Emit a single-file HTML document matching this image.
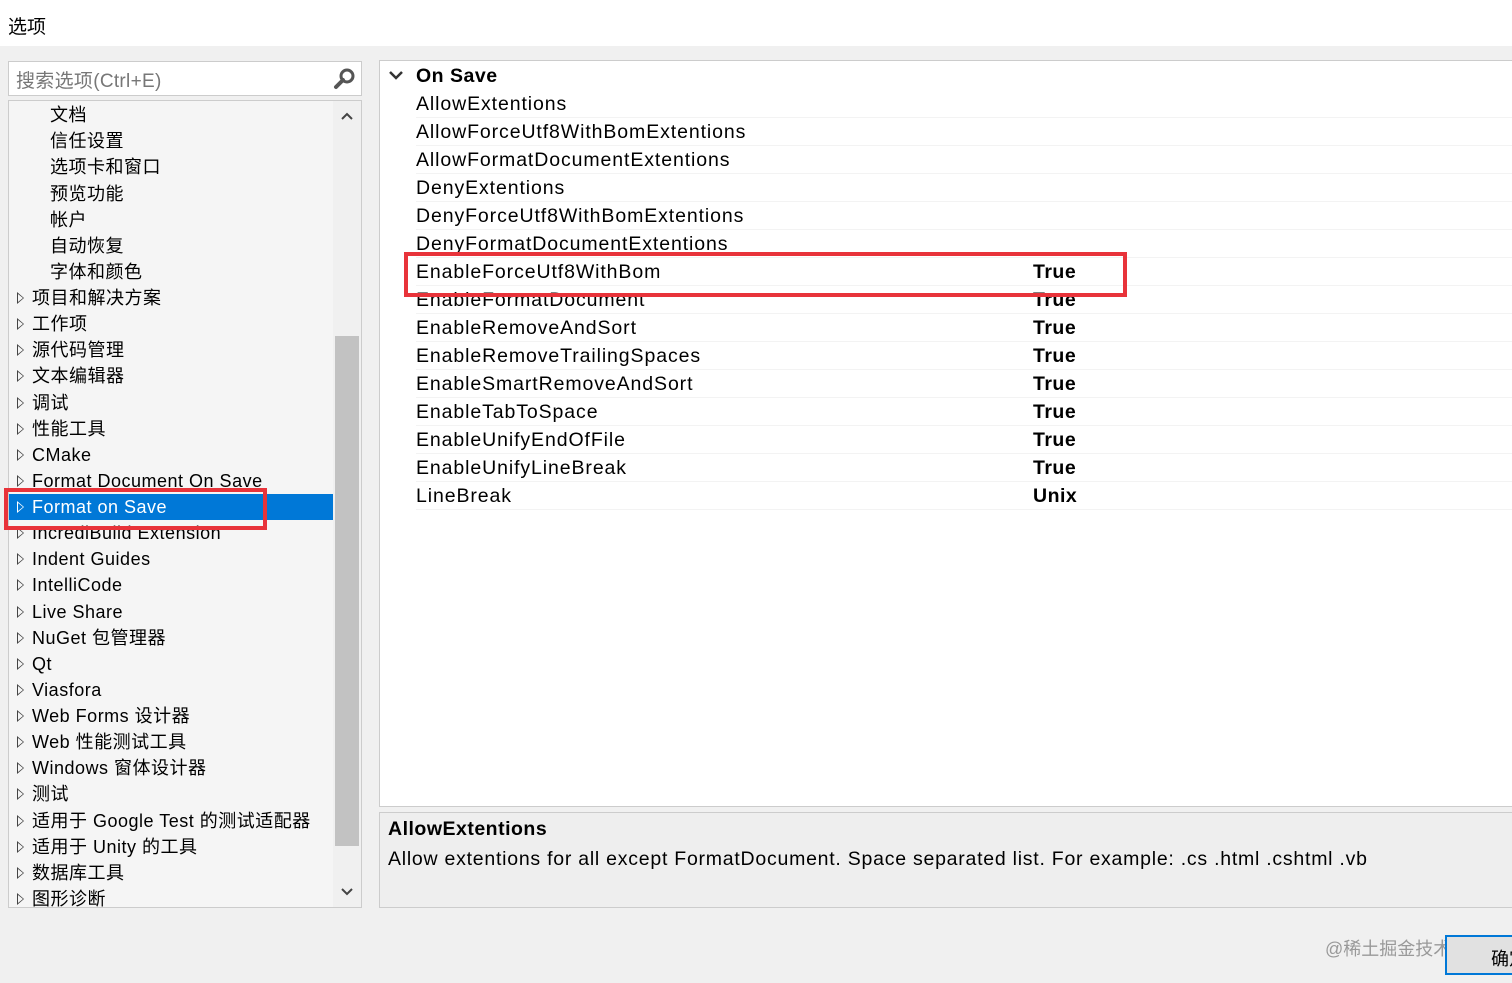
<!DOCTYPE html>
<html><head><meta charset="utf-8"><style>
*{margin:0;padding:0;box-sizing:border-box}
body{width:1512px;height:983px;overflow:hidden;background:#f0f0f0;font-family:"Liberation Sans","Noto Sans CJK SC",sans-serif;color:#000;position:relative}
.abs{position:absolute}
#title{left:0;top:0;width:1512px;height:46px;background:#fff;font-size:19px;padding:12px 0 0 8px}
#search{left:8px;top:61px;width:354px;height:35px;background:#fff;border:1px solid #ccc;font-size:19px;color:#777;padding:4px 0 0 7px;letter-spacing:0.3px}
#tree{left:8px;top:100px;width:354px;height:808px;background:#f5f5f5;border:1px solid #ccc;overflow:hidden}
.ti{position:absolute;left:0;height:26px;font-size:18px;line-height:26px;white-space:nowrap;letter-spacing:0.5px}
.ti .ar{display:inline-block;width:0;height:0;border-left:7px solid #444;border-top:6px solid transparent;border-bottom:6px solid transparent;position:relative;margin:0 8px 0 8px;top:0}
.ti .ar:after{content:"";position:absolute;left:-6px;top:-4px;border-left:5px solid #f5f5f5;border-top:4px solid transparent;border-bottom:4px solid transparent}
.sel{background:#0078d7;color:#fff;width:324px}
.sel .ar{border-left-color:#fff}.sel .ar:after{border-left-color:#0078d7}
#sb{left:324px;top:0;width:28px;height:806px;background:#f0f0f0}
#thumb{left:326px;top:235px;width:24px;height:510px;background:#c2c2c2}
#grid{left:379px;top:60px;width:1140px;height:747px;background:#fff;border:1px solid #ccc}
.row{position:absolute;left:30px;width:1110px;height:28px;font-size:19.5px;line-height:28px;border-bottom:1px solid #f3f3f3;white-space:nowrap;letter-spacing:0.9px}
.row .v{position:absolute;left:617px;font-weight:bold;letter-spacing:0.5px}
#desc{left:379px;top:812px;width:1140px;height:96px;background:#eee;border:1px solid #ccc;font-size:19.5px;padding:5px 8px;white-space:nowrap}
.red{position:absolute;border:4px solid #e8333a}
</style></head><body>
<div id="title" class="abs">选项</div>
<div id="search" class="abs">搜索选项(Ctrl+E)
<svg class="abs" style="left:324px;top:5px" width="24" height="24" viewBox="0 0 24 24"><circle cx="14" cy="9" r="6" fill="none" stroke="#555" stroke-width="3"/><path d="M10 13 L3 20" stroke="#555" stroke-width="4" stroke-linecap="round"/></svg></div>
<div id="tree" class="abs">
<div class="ti" style="top:1px;left:41px">文档</div>
<div class="ti" style="top:27px;left:41px">信任设置</div>
<div class="ti" style="top:53px;left:41px">选项卡和窗口</div>
<div class="ti" style="top:80px;left:41px">预览功能</div>
<div class="ti" style="top:106px;left:41px">帐户</div>
<div class="ti" style="top:132px;left:41px">自动恢复</div>
<div class="ti" style="top:158px;left:41px">字体和颜色</div>
<div class="ti" style="top:184px"><span class="ar"></span>项目和解决方案</div>
<div class="ti" style="top:210px"><span class="ar"></span>工作项</div>
<div class="ti" style="top:236px"><span class="ar"></span>源代码管理</div>
<div class="ti" style="top:262px"><span class="ar"></span>文本编辑器</div>
<div class="ti" style="top:289px"><span class="ar"></span>调试</div>
<div class="ti" style="top:315px"><span class="ar"></span>性能工具</div>
<div class="ti" style="top:341px"><span class="ar"></span>CMake</div>
<div class="ti" style="top:367px"><span class="ar"></span>Format Document On Save</div>
<div class="ti sel" style="top:393px"><span class="ar"></span>Format on Save</div>
<div class="ti" style="top:419px"><span class="ar"></span>IncrediBuild Extension</div>
<div class="ti" style="top:445px"><span class="ar"></span>Indent Guides</div>
<div class="ti" style="top:471px"><span class="ar"></span>IntelliCode</div>
<div class="ti" style="top:498px"><span class="ar"></span>Live Share</div>
<div class="ti" style="top:524px"><span class="ar"></span>NuGet 包管理器</div>
<div class="ti" style="top:550px"><span class="ar"></span>Qt</div>
<div class="ti" style="top:576px"><span class="ar"></span>Viasfora</div>
<div class="ti" style="top:602px"><span class="ar"></span>Web Forms 设计器</div>
<div class="ti" style="top:628px"><span class="ar"></span>Web 性能测试工具</div>
<div class="ti" style="top:654px"><span class="ar"></span>Windows 窗体设计器</div>
<div class="ti" style="top:680px"><span class="ar"></span>测试</div>
<div class="ti" style="top:707px"><span class="ar"></span>适用于 Google Test 的测试适配器</div>
<div class="ti" style="top:733px"><span class="ar"></span>适用于 Unity 的工具</div>
<div class="ti" style="top:759px"><span class="ar"></span>数据库工具</div>
<div class="ti" style="top:785px"><span class="ar"></span>图形诊断</div>
<div id="sb" class="abs"></div>
<div id="thumb" class="abs"></div>
<svg class="abs" style="left:331px;top:10px" width="14" height="10"><path d="M2 8 L7 3 L12 8" fill="none" stroke="#444" stroke-width="2"/></svg>
<svg class="abs" style="left:331px;top:786px" width="14" height="10"><path d="M2 2 L7 7 L12 2" fill="none" stroke="#444" stroke-width="2"/></svg>
</div>
<div class="red" style="left:4px;top:488px;width:263px;height:42px"></div>
<div id="grid" class="abs">
<svg class="abs" style="left:8px;top:8px" width="16" height="12"><path d="M2 3 L8 9 L14 3" fill="none" stroke="#333" stroke-width="2.5"/></svg>
<div class="row" style="top:1px;left:36px;font-weight:bold;border:none;letter-spacing:0.5px">On Save</div>
<div class="row" style="top:29px;left:36px">AllowExtentions</div>
<div class="row" style="top:57px;left:36px">AllowForceUtf8WithBomExtentions</div>
<div class="row" style="top:85px;left:36px">AllowFormatDocumentExtentions</div>
<div class="row" style="top:113px;left:36px">DenyExtentions</div>
<div class="row" style="top:141px;left:36px">DenyForceUtf8WithBomExtentions</div>
<div class="row" style="top:169px;left:36px">DenyFormatDocumentExtentions</div>
<div class="row" style="top:197px;left:36px">EnableForceUtf8WithBom<span class="v">True</span></div>
<div class="row" style="top:225px;left:36px">EnableFormatDocument<span class="v">True</span></div>
<div class="row" style="top:253px;left:36px">EnableRemoveAndSort<span class="v">True</span></div>
<div class="row" style="top:281px;left:36px">EnableRemoveTrailingSpaces<span class="v">True</span></div>
<div class="row" style="top:309px;left:36px">EnableSmartRemoveAndSort<span class="v">True</span></div>
<div class="row" style="top:337px;left:36px">EnableTabToSpace<span class="v">True</span></div>
<div class="row" style="top:365px;left:36px">EnableUnifyEndOfFile<span class="v">True</span></div>
<div class="row" style="top:393px;left:36px">EnableUnifyLineBreak<span class="v">True</span></div>
<div class="row" style="top:421px;left:36px">LineBreak<span class="v">Unix</span></div>
</div>
<div class="red" style="left:404px;top:252px;width:723px;height:45px"></div>
<div id="desc" class="abs"><b style="letter-spacing:0.5px">AllowExtentions</b><br><span style="line-height:36px;letter-spacing:0.75px">Allow extentions for all except FormatDocument. Space separated list. For example: .cs .html .cshtml .vb</span></div>
<div class="abs" style="left:1325px;top:935px;font-size:18px;color:#999;white-space:nowrap">@稀土掘金技术社区</div>
<div class="abs" style="left:1445px;top:935px;width:80px;height:40px;border:2px solid #0078d7;background:#e1e1e1;font-size:18px;padding:8px 0 0 44px;white-space:nowrap;overflow:hidden">确定</div>
</body></html>
